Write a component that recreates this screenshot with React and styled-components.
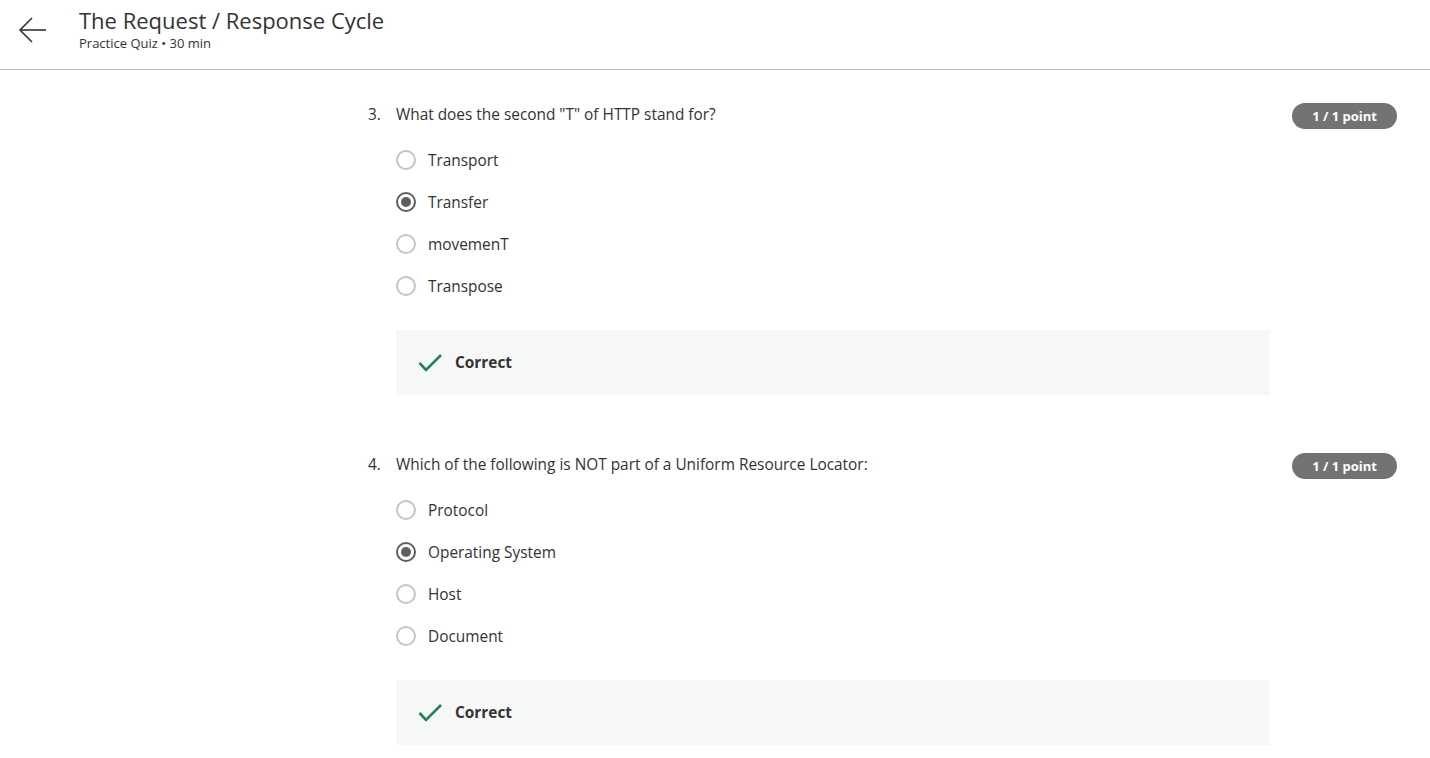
import styled, { createGlobalStyle } from 'styled-components';

const GlobalStyle = createGlobalStyle`
  body {
    margin: 0;
    background: #fff;
    font-family: 'Open Sans', 'Liberation Sans', sans-serif;
    color: #1f1f1f;
  }
`;

const Header = styled.header`
  height: 69px;
  border-bottom: 1px solid #bdbdbd;
  display: flex;
  align-items: flex-start;
`;

const BackButton = styled.button`
  width: 79px;
  height: 60px;
  padding: 0 0 0 18px;
  border: 0;
  background: none;
  display: flex;
  align-items: center;
  cursor: pointer;
`;

const TitleBlock = styled.div`
  padding-top: 5px;
`;

const Title = styled.h1`
  margin: 0;
  font-size: 22px;
  font-weight: 400;
  line-height: 30px;
  color: #333;
`;

const Subtitle = styled.div`
  font-size: 13px;
  line-height: 16px;
  color: #333;
`;

const Main = styled.main`
  padding: 33px 33px 0 368px;
`;

const Question = styled.section`
  margin-bottom: 58px;

  &:last-child {
    margin-bottom: 0;
  }
`;

const QuestionHead = styled.div`
  display: flex;
  align-items: flex-start;
`;

const Number = styled.span`
  width: 28px;
  font-size: 15.4px;
  line-height: 24px;
  color: #333;
`;

const Prompt = styled.div`
  flex: 1;
  font-size: 15.4px;
  line-height: 24px;
  color: #333;
`;

const Badge = styled.span`
  height: 26px;
  padding: 0 20px;
  border-radius: 13px;
  background: #737373;
  color: #fff;
  font-size: 13px;
  font-weight: 700;
  line-height: 26px;
  white-space: nowrap;
`;

const Options = styled.div`
  margin: 10px 0 0 28px;
  display: flex;
  flex-direction: column;
`;

const Option = styled.label`
  height: 42px;
  display: flex;
  align-items: center;
  gap: 12px;
  font-size: 15.4px;
  color: #333;
`;

const Radio = styled.span`
  width: 20px;
  height: 20px;
  box-sizing: border-box;
  border-radius: 50%;
  border: 2px solid ${p => (p.$checked ? '#5e5e5e' : '#c4c4c4')};
  display: flex;
  align-items: center;
  justify-content: center;

  &::after {
    content: '';
    width: 10px;
    height: 10px;
    border-radius: 50%;
    background: ${p => (p.$checked ? '#5e5e5e' : 'transparent')};
  }
`;

const Feedback = styled.div`
  margin: 23px 0 0 28px;
  width: 874px;
  height: 65px;
  background: #f5f8f7;
  display: flex;
  align-items: center;
  padding-left: 22px;
  box-sizing: border-box;
  gap: 13px;
  font-size: 15.4px;
  font-weight: 700;
  color: #333;
`;

const questions = [
  {
    n: 3,
    text: 'What does the second "T" of HTTP stand for?',
    options: ['Transport', 'Transfer', 'movemenT', 'Transpose'],
    picked: 1,
  },
  {
    n: 4,
    text: 'Which of the following is NOT part of a Uniform Resource Locator:',
    options: ['Protocol', 'Operating System', 'Host', 'Document'],
    picked: 1,
  },
];

function App() {
  return (
    <>
      <GlobalStyle />
      <Header>
        <BackButton aria-label="Back">
          <svg width="30" height="30" viewBox="0 0 30 30" fill="none" stroke="#333" strokeWidth="1.6">
            <path d="M28 15H3" />
            <path d="M14 3L2 15l12 12" />
          </svg>
        </BackButton>
        <TitleBlock>
          <Title>The Request / Response Cycle</Title>
          <Subtitle>Practice Quiz • 30 min</Subtitle>
        </TitleBlock>
      </Header>
      <Main>
        {questions.map(q => (
          <Question key={q.n}>
            <QuestionHead>
              <Number>{q.n}.</Number>
              <Prompt>{q.text}</Prompt>
              <Badge>1 / 1 point</Badge>
            </QuestionHead>
            <Options>
              {q.options.map((o, i) => (
                <Option key={o}>
                  <Radio $checked={i === q.picked} />
                  {o}
                </Option>
              ))}
            </Options>
            <Feedback>
              <svg width="24" height="20" viewBox="0 0 24 20" fill="none" stroke="#1f8354" strokeWidth="2.6">
                <path d="M1.5 10l6.5 7L23 2" />
              </svg>
              Correct
            </Feedback>
          </Question>
        ))}
      </Main>
    </>
  );
}

export default App;
